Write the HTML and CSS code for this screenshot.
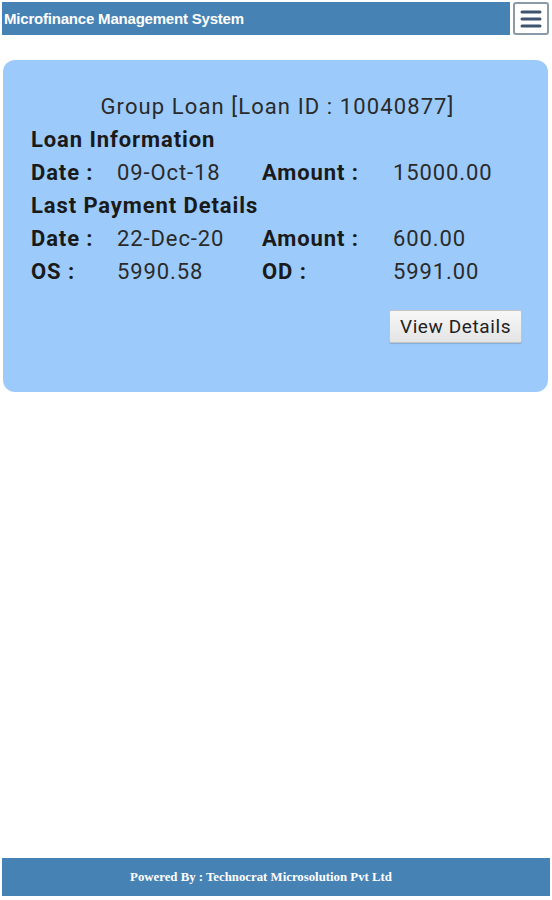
FILE: index.html
```html
<!DOCTYPE html>
<html>
<head>
<meta charset="utf-8">
<link rel="stylesheet" href="styles.css">
</head>
<body>
<div class="page">
  <header class="topbar">
    <div class="title">Microfinance Management System</div>
    <button class="menu" aria-label="menu">
      <svg width="26" height="24" viewBox="0 0 26 24"><g stroke="#3d5470" stroke-width="3" stroke-linecap="round"><line x1="4" y1="5" x2="22" y2="5"/><line x1="4" y1="12" x2="22" y2="12"/><line x1="4" y1="19" x2="22" y2="19"/></g></svg>
    </button>
  </header>
  <main class="content">
    <section class="card">
      <div class="card-title">Group Loan [Loan ID : 10040877]</div>
      <div class="section-head">Loan Information</div>
      <div class="row"><span class="lbl">Date :</span><span class="val">09-Oct-18</span><span class="lbl">Amount :</span><span class="val">15000.00</span></div>
      <div class="section-head">Last Payment Details</div>
      <div class="row"><span class="lbl">Date :</span><span class="val">22-Dec-20</span><span class="lbl">Amount :</span><span class="val">600.00</span></div>
      <div class="row"><span class="lbl">OS :</span><span class="val">5990.58</span><span class="lbl">OD :</span><span class="val">5991.00</span></div>
      <div class="actions"><button class="btn">View Details</button></div>
    </section>
  </main>
  <footer class="footer">Powered By : Technocrat Microsolution Pvt Ltd</footer>
</div>
</body>
</html>
```
FILE: styles.css
```css
html, body { margin: 0; padding: 0; background: #fff; }
body { font-family: Roboto, "Liberation Sans", sans-serif; }
.page { width: 552px; height: 900px; display: flex; flex-direction: column; }
.topbar { display: flex; align-items: stretch; gap: 3px; padding: 2px 3px 0 2px; height: 33px; }
.title { flex: 1; background: #4682b4; color: #fff; font-family: "Liberation Sans", Arial, sans-serif; font-weight: bold; font-size: 15px; display: flex; align-items: center; padding-left: 2px; letter-spacing: -0.2px; }
.menu { width: 36px; padding: 0; margin: 0; background: #fff; border: 2px solid #8a9aaa; border-radius: 3px; display: flex; align-items: center; justify-content: center; }
.content { flex: 1; padding: 25px 4px 0 3px; }
.card { background: #9ccbfb; border-radius: 12px; height: 332px; box-sizing: border-box; padding: 30px 26px 0 28px; color: #1a1a1a; letter-spacing: 0.9px; }
.card-title { text-align: center; font-size: 22px; letter-spacing: 1.1px; color: #2a2a2a; height: 33px; line-height: 33px; padding-left: 2px; }
.section-head { font-weight: bold; font-size: 22px; height: 33px; line-height: 33px; margin-top: 0; }
.row { display: grid; grid-template-columns: 86px 145px 131px 1fr; font-size: 22px; height: 33px; line-height: 33px; }
.lbl { font-weight: bold; }
.val { color: #2a2a2a; }
.actions { display: flex; justify-content: flex-end; padding-top: 22px; }
.btn { font-family: Roboto, "Liberation Sans", sans-serif; font-size: 19px; letter-spacing: 0.6px; color: #222; background: linear-gradient(#f7f7f7, #e4e4e4); border: 1px solid #c4c4c4; border-radius: 2px; width: 133px; height: 33px; padding: 0; box-shadow: 0 1px 1px rgba(0,0,0,0.15); }
.footer { background: #4682b4; color: #fff; font-family: "Liberation Serif", "Times New Roman", serif; font-weight: bold; font-size: 12.8px; height: 38px; margin: 0 2px 4px 2px; display: flex; align-items: center; justify-content: center; padding-right: 30px; }
```
